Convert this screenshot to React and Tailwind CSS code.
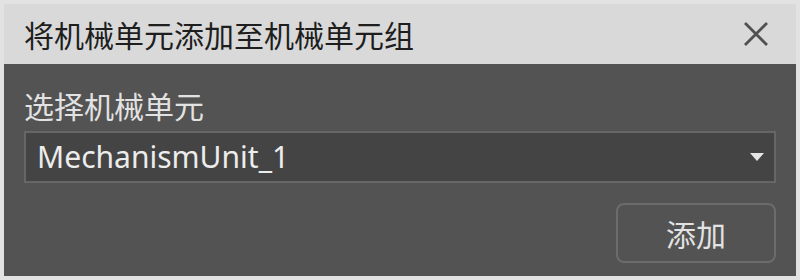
export default function App() {
  const cjk = { fontFamily: '"Noto Sans CJK SC", "Noto Sans", sans-serif' };
  return (
    <div className="w-[800px] h-[280px] bg-[#e2e2e2] p-[4px]" style={cjk}>
      <div className="flex h-full flex-col">
        {/* title bar */}
        <div className="flex h-[60px] items-center justify-between bg-[#d9d9d9] pl-[20px] pr-[28px]">
          <span className="text-[30px] leading-none text-[#1e1e1e]">将机械单元添加至机械单元组</span>
          <svg width="24" height="24" viewBox="0 0 24 24" className="text-[#505050]">
            <path d="M1 1 L23 23 M23 1 L1 23" stroke="currentColor" strokeWidth="2.8" />
          </svg>
        </div>

        {/* body */}
        <div className="flex flex-1 flex-col bg-[#535353] px-[20px] pt-[26px]">
          <div className="text-[30px] leading-none text-[#e2e2e2]">选择机械单元</div>
          <div className="mt-[11px] flex h-[52px] items-center justify-between border-2 border-[#666] bg-[#444] pl-[11px] pr-[10px]">
            <span className="text-[30px] leading-none text-[#ececec]" style={{ fontFamily: '"Noto Sans", sans-serif' }}>
              MechanismUnit_1
            </span>
            <svg width="14" height="8" viewBox="0 0 14 8">
              <path d="M0 0 L14 0 L7 8 Z" fill="#e6e6e6" />
            </svg>
          </div>
          <div className="mt-[20px] flex justify-end">
            <button className="flex h-[60px] w-[160px] items-center justify-center rounded-[8px] border-2 border-[#6c6c6c] text-[30px] leading-none text-[#e2e2e2]">
              添加
            </button>
          </div>
        </div>
      </div>
    </div>
  );
}
